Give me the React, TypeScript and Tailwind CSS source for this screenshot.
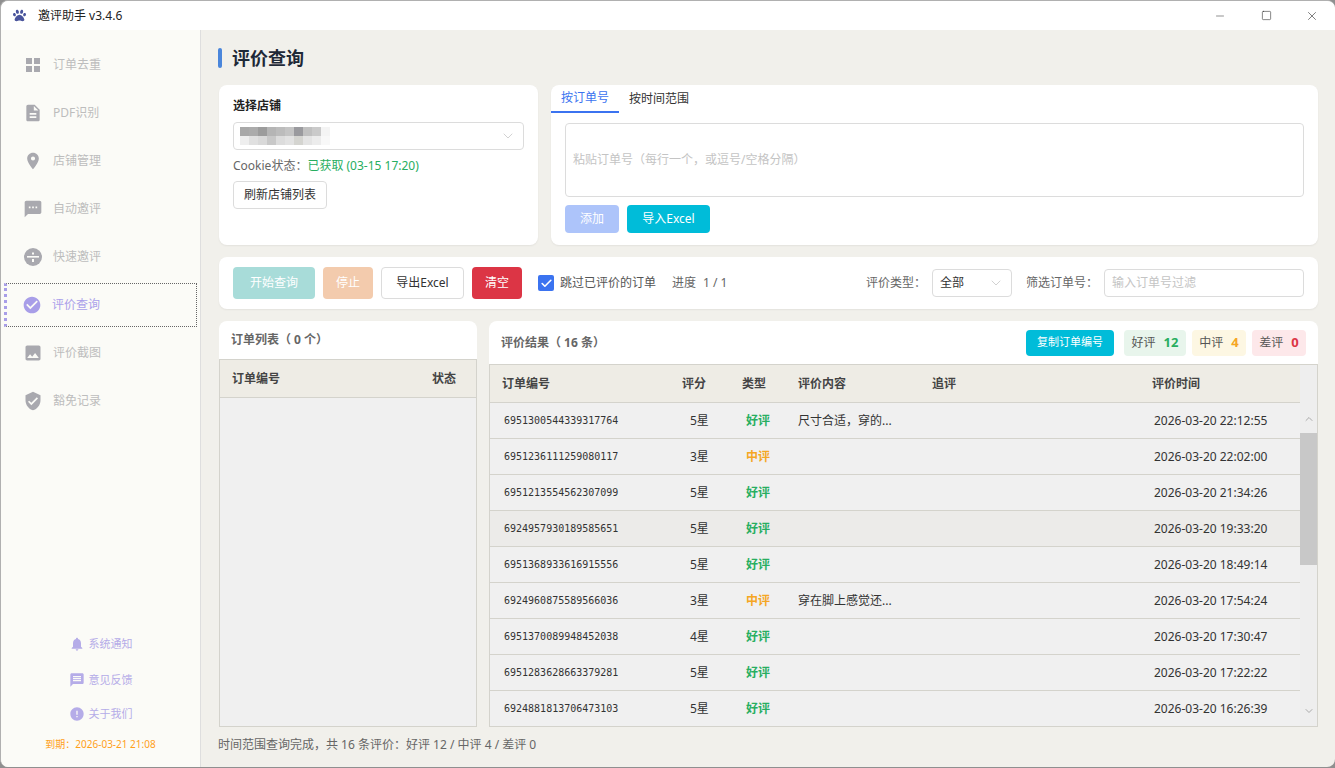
import { FC, ReactNode } from "react";
import { FaPaw } from "react-icons/fa";
import {
  MdCheckCircle,
  MdDescription,
  MdError,
  MdImage,
  MdLocationOn,
  MdMessage,
  MdNotifications,
  MdSms,
  MdVerifiedUser,
} from "react-icons/md";
import { Check, ChevronDown, ChevronUp, Minus, Square, X } from "lucide-react";

const GridIcon = () => (
  <svg width="20" height="20" viewBox="0 0 20 20" fill="currentColor">
    <rect x="3" y="3" width="6" height="6" />
    <rect x="11" y="3" width="6" height="6" />
    <rect x="3" y="11" width="6" height="6" />
    <rect x="11" y="11" width="6" height="6" />
  </svg>
);

const SpeedIcon = () => (
  <svg width="20" height="20" viewBox="0 0 20 20">
    <circle cx="10" cy="10" r="9" fill="currentColor" />
    <rect x="4" y="9" width="12" height="1.6" fill="#fbfbf7" />
    <rect x="9" y="5.5" width="2" height="2" fill="#fbfbf7" />
    <rect x="9" y="12" width="2" height="3" fill="#fbfbf7" />
  </svg>
);

const navItems: { label: string; icon: ReactNode; active?: boolean }[] = [
  { label: "订单去重", icon: <GridIcon /> },
  { label: "PDF识别", icon: <MdDescription size={22} /> },
  { label: "店铺管理", icon: <MdLocationOn size={22} /> },
  { label: "自动邀评", icon: <MdSms size={22} /> },
  { label: "快速邀评", icon: <SpeedIcon /> },
  { label: "评价查询", icon: <MdCheckCircle size={22} />, active: true },
  { label: "评价截图", icon: <MdImage size={22} /> },
  { label: "豁免记录", icon: <MdVerifiedUser size={22} /> },
];

const rows = [
  ["6951300544339317764", "5星", "好评", "尺寸合适，穿的...", "2026-03-20 22:12:55"],
  ["6951236111259080117", "3星", "中评", "", "2026-03-20 22:02:00"],
  ["6951213554562307099", "5星", "好评", "", "2026-03-20 21:34:26"],
  ["6924957930189585651", "5星", "好评", "", "2026-03-20 19:33:20"],
  ["6951368933616915556", "5星", "好评", "", "2026-03-20 18:49:14"],
  ["6924960875589566036", "3星", "中评", "穿在脚上感觉还...", "2026-03-20 17:54:24"],
  ["6951370089948452038", "4星", "好评", "", "2026-03-20 17:30:47"],
  ["6951283628663379281", "5星", "好评", "", "2026-03-20 17:22:22"],
  ["6924881813706473103", "5星", "好评", "", "2026-03-20 16:26:39"],
];

const mosaicTop = [
  "bg-[#a8a8a8]", "bg-[#ababab]", "bg-[#9c9c9c]", "bg-[#b5b5b5]", "bg-[#bcbcbc]",
  "bg-[#c4c4c4]", "bg-[#9a9a9e]", "bg-[#c0c0c0]", "bg-[#cacaca]", "bg-[#f4f4f4]",
];
const mosaicBottom = [
  "bg-[#eeeeee]", "bg-[#e0e0e0]", "bg-[#d9d9d9]", "bg-[#c8c8c8]", "bg-[#dcdcdc]",
  "bg-[#e2e2e2]", "bg-[#d4d4d0]", "bg-[#e4e4e4]", "bg-[#ececec]", "bg-[#f8f8f8]",
];

const StatBadge: FC<{ label: string; value: number; box: string; tone: string }> = ({ label, value, box, tone }) => (
  <div className={`flex h-[26px] items-center justify-center gap-[8px] rounded-[4px] ${box}`}>
    <span className="text-[12px] text-[#555]">{label}</span>
    <span className={`text-[13px] font-bold ${tone}`}>{value}</span>
  </div>
);

const Card: FC<{ className?: string; children: ReactNode }> = ({ className, children }) => (
  <div className={`rounded-[8px] bg-white shadow-[0_1px_2px_rgba(0,0,0,0.06)] ${className}`}>{children}</div>
);

export default function App() {
  return (
    <div className="h-[768px] w-[1335px] overflow-hidden bg-[#8f8f8f] font-['Noto_Sans','Noto_Sans_CJK_SC',sans-serif]">
      <div className="flex h-[767px] w-[1335px] flex-col overflow-hidden rounded-[8px] border-l border-t border-[#b0b0b0] bg-[#f1f0eb]">
        {/* Title bar */}
        <div className="flex h-[29px] shrink-0 items-center bg-white">
          <FaPaw size={13} className="ml-[12px] text-[#49549c]" />
          <span className="ml-[12px] text-[12px] text-[#222]">邀评助手 v3.4.6</span>
          <div className="ml-auto flex items-center text-[#222]">
            <div className="flex w-[46px] justify-center">
              <Minus size={12} strokeWidth={1} />
            </div>
            <div className="flex w-[46px] justify-center">
              <Square size={11} strokeWidth={1.2} />
            </div>
            <div className="flex w-[46px] justify-center">
              <X size={14} strokeWidth={1} />
            </div>
          </div>
        </div>

        <div className="flex min-h-0 flex-1">
          {/* Sidebar */}
          <aside className="flex w-[200px] shrink-0 flex-col border-r border-[#dedede] bg-[#fbfbf7] pl-[3px] pr-[3px] pt-[13px]">
            <nav className="flex flex-col gap-[4px]">
              {navItems.map((item) => (
                <div
                  key={item.label}
                  className={`flex h-[44px] items-center ${
                    item.active
                      ? "border border-l-[3px] border-dotted border-[#666] border-l-solid border-l-[#a89ee8] text-[#a89ee8]"
                      : "text-[#a9a9af]"
                  }`}
                >
                  <span className={`flex w-[20px] justify-center ${item.active ? "ml-[15px]" : "ml-[19px]"}`}>{item.icon}</span>
                  <span className={`ml-[10px] text-[12px] ${item.active ? "text-[#aaa0ea]" : "text-[#bdbdbd]"}`}>{item.label}</span>
                </div>
              ))}
            </nav>
            <div className="mt-auto flex flex-col items-center pb-[15px] text-[11px] text-[#b5ace8]">
              <div className="flex h-[20px] items-center gap-[4px]">
                <MdNotifications size={16} />
                <span>系统通知</span>
              </div>
              <div className="mt-[16px] flex h-[20px] items-center gap-[4px]">
                <MdMessage size={16} />
                <span>意见反馈</span>
              </div>
              <div className="mt-[14px] flex h-[20px] items-center gap-[4px]">
                <MdError size={16} />
                <span>关于我们</span>
              </div>
              <div className="mt-[13px] text-[10px] text-[#ff9f1a]">到期：2026-03-21 21:08</div>
            </div>
          </aside>

          {/* Main */}
          <main className="flex min-w-0 flex-1 flex-col pl-[17px] pr-[17px] pt-[18px]">
            <div className="flex h-[20px] items-center gap-[10px]">
              <div className="h-[20px] w-[4px] rounded-[2px] bg-[#4a86db]" />
              <h1 className="text-[18px] font-bold text-[#1f2937]">评价查询</h1>
            </div>

            <div className="mt-[17px] flex h-[160px] gap-[13px] pl-[1px]">
              <Card className="w-[319px] px-[14px] pt-[12px]">
                <div className="text-[12px] font-bold leading-[17px] text-[#222]">选择店铺</div>
                <div className="mt-[8px] flex h-[28px] items-center justify-between rounded-[4px] border border-[#dcdcdc] pl-[6px] pr-[7px]">
                  <div className="flex flex-col">
                    <div className="flex">
                      {mosaicTop.map((c, i) => (
                        <div key={i} className={`h-[9px] w-[9px] ${c}`} />
                      ))}
                    </div>
                    <div className="flex">
                      {mosaicBottom.map((c, i) => (
                        <div key={i} className={`h-[9px] w-[9px] ${c}`} />
                      ))}
                    </div>
                  </div>
                  <ChevronDown size={16} strokeWidth={1} className="text-[#bbb]" />
                </div>
                <div className="mt-[7px] text-[12px] leading-[17px] text-[#666]">
                  Cookie状态：<span className="text-[#27ae60]">已获取 (03-15 17:20)</span>
                </div>
                <button className="mt-[7px] h-[28px] w-[94px] rounded-[4px] border border-[#dcdcdc] text-[12px] text-[#333]">
                  刷新店铺列表
                </button>
              </Card>

              <Card className="flex-1">
                <div className="flex h-[28px] text-[12px]">
                  <div className="flex h-[28px] w-[68px] items-center justify-center border-b-2 border-[#3b73f0] text-[#3b73f0]">按订单号</div>
                  <div className="ml-[10px] flex items-center pb-[1px] text-[#333]">按时间范围</div>
                </div>
                <div className="px-[14px] pt-[10px]">
                  <div className="flex h-[74px] items-center rounded-[4px] border border-[#dcdcdc] px-[7px] text-[12px] text-[#c4c4c4]">
                    粘贴订单号（每行一个，或逗号/空格分隔）
                  </div>
                  <div className="mt-[8px] flex gap-[8px]">
                    <button className="h-[28px] w-[54px] rounded-[4px] bg-[#adc4fa] text-[12px] text-white">添加</button>
                    <button className="h-[28px] w-[83px] rounded-[4px] bg-[#00bcd9] text-[12px] text-white">导入Excel</button>
                  </div>
                </div>
              </Card>
            </div>

            <Card className="ml-[1px] mt-[12px] flex h-[52px] items-center px-[14px]">
              <button className="h-[32px] w-[82px] rounded-[4px] bg-[#a8dcd9] text-[12px] text-white">开始查询</button>
              <button className="ml-[8px] h-[32px] w-[50px] rounded-[4px] bg-[#f3cbad] text-[12px] text-white">停止</button>
              <button className="ml-[8px] h-[32px] w-[83px] rounded-[4px] border border-[#dcdcdc] text-[12px] text-[#333]">导出Excel</button>
              <button className="ml-[8px] h-[32px] w-[50px] rounded-[4px] bg-[#dc3545] text-[12px] text-white">清空</button>
              <div className="ml-[16px] flex h-[16px] w-[16px] items-center justify-center rounded-[2px] bg-[#3b73f0]">
                <Check size={13} strokeWidth={3} className="text-white" />
              </div>
              <span className="ml-[6px] text-[12px] text-[#555]">跳过已评价的订单</span>
              <span className="ml-[16px] text-[12px] text-[#666]">进度</span>
              <span className="ml-[7px] text-[12px] text-[#666]">1 / 1</span>
              <span className="ml-auto text-[12px] text-[#666]">评价类型：</span>
              <div className="ml-[6px] flex h-[28px] w-[80px] items-center justify-between rounded-[4px] border border-[#dcdcdc] pl-[7px] pr-[7px] text-[12px] text-[#333]">
                全部
                <ChevronDown size={16} strokeWidth={1} className="text-[#bbb]" />
              </div>
              <span className="ml-[14px] text-[12px] text-[#666]">筛选订单号：</span>
              <div className="ml-[6px] flex h-[28px] w-[200px] items-center rounded-[4px] border border-[#dcdcdc] px-[7px] text-[12px] text-[#c4c4c4]">
                输入订单号过滤
              </div>
            </Card>

            <div className="ml-[1px] mt-[12px] flex h-[406px] gap-[12px]">
              {/* Order list */}
              <div className="flex w-[258px] flex-col overflow-hidden rounded-t-[8px] bg-white">
                <div className="flex h-[38px] shrink-0 items-center px-[12px] text-[12px] font-bold text-[#666]">订单列表（ 0 个）</div>
                <div className="flex min-h-0 flex-1 flex-col border border-[#d4d3cc] bg-[#f0f0f0]">
                  <div className="flex h-[38px] shrink-0 items-center justify-between border-b border-[#d4d3cc] bg-[#eeece5] pl-[12px] pr-[20px] text-[12px] font-bold text-[#444]">
                    <span>订单编号</span>
                    <span>状态</span>
                  </div>
                </div>
              </div>

              {/* Results */}
              <div className="flex min-w-0 flex-1 flex-col overflow-hidden rounded-t-[8px] bg-white">
                <div className="flex h-[43px] shrink-0 items-center pl-[12px] pr-[12px]">
                  <span className="text-[12px] font-bold text-[#666]">评价结果（ 16 条）</span>
                  <button className="ml-auto h-[26px] w-[88px] rounded-[4px] bg-[#00bcd9] text-[11px] text-white">复制订单编号</button>
                  <div className="ml-[10px] flex gap-[6px]">
                    <StatBadge label="好评" value={12} box="w-[62px] bg-[#e8f5ec]" tone="text-[#27ae60]" />
                    <StatBadge label="中评" value={4} box="w-[54px] bg-[#fdf7e3]" tone="text-[#f5a623]" />
                    <StatBadge label="差评" value={0} box="w-[54px] bg-[#fde8ea]" tone="text-[#dc3545]" />
                  </div>
                </div>
                <div className="relative flex min-h-0 flex-1 overflow-hidden border border-[#d4d3cc] bg-[#f0f0f0]">
                  <div className="w-[810px] shrink-0">
                    <div className="flex h-[38px] items-center border-b border-[#d4d3cc] bg-[#eeece5] text-[12px] font-bold text-[#444]">
                      <span className="w-[178px] pl-[12px]">订单编号</span>
                      <span className="w-[60px] pl-[14px]">评分</span>
                      <span className="w-[56px] pl-[14px]">类型</span>
                      <span className="w-[134px] pl-[14px]">评价内容</span>
                      <span className="w-[220px] pl-[14px]">追评</span>
                      <span className="pl-[14px]">评价时间</span>
                    </div>
                    {rows.map((r, i) => (
                      <div
                        key={r[0]}
                        className={`flex h-[36px] items-center border-b border-[#d4d3cc] text-[12px] text-[#333] ${i === 3 ? "bg-[#ecebe9]" : ""}`}
                      >
                        <span className="w-[178px] pl-[14px] font-['DejaVu_Sans_Mono',monospace] text-[10px]">{r[0]}</span>
                        <span className="w-[60px] pl-[22px]">{r[1]}</span>
                        <span className={`w-[56px] pl-[18px] font-bold ${r[2] === "好评" ? "text-[#27ae60]" : "text-[#f5a623]"}`}>{r[2]}</span>
                        <span className="w-[134px] pl-[14px]">{r[3]}</span>
                        <span className="w-[220px]" />
                        <span className="pl-[16px]">{r[4]}</span>
                      </div>
                    ))}
                  </div>
                  {/* Scrollbar */}
                  <div className="relative flex-1 bg-[#eeeeee]">
                    <ChevronUp size={12} className="absolute left-[3px] top-[48px] text-[#aaa]" />
                    <div className="absolute left-0 right-0 top-[68px] h-[132px] bg-[#c8c8c8]" />
                    <ChevronDown size={12} className="absolute left-[3px] top-[340px] text-[#aaa]" />
                  </div>
                </div>
              </div>
            </div>

            <div className="mt-[9px] text-[12px] leading-[17px] text-[#666]">时间范围查询完成，共 16 条评价：好评 12 / 中评 4 / 差评 0</div>
          </main>
        </div>
      </div>
    </div>
  );
}
